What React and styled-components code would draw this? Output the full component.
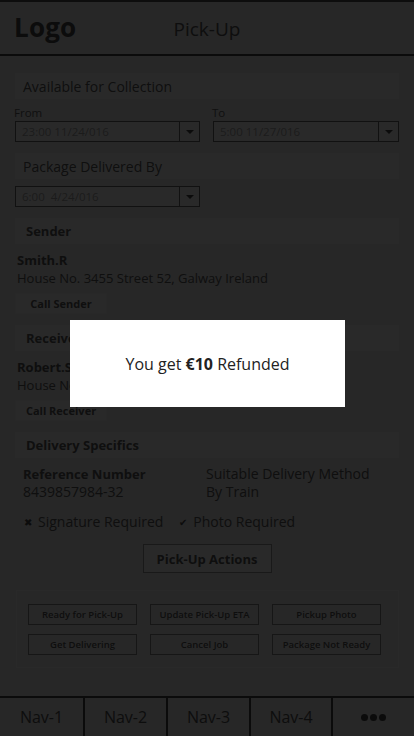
import React from 'react';
import styled, { createGlobalStyle } from 'styled-components';

const GlobalStyle = createGlobalStyle`
  html, body {
    margin: 0;
    padding: 0;
  }
  body {
    font-family: "Open Sans", "Liberation Sans", sans-serif;
    color: #666;
  }
  * {
    box-sizing: border-box;
  }
`;

const App = () => {
  const actions = [
    'Ready for Pick-Up',
    'Update Pick-Up ETA',
    'Pickup Photo',
    'Get Delivering',
    'Cancel Job',
    'Package Not Ready'
  ];

  return (
    <>
      <GlobalStyle />
      <Page>
        <Header>
          <Logo>Logo</Logo>
          <Title>Pick-Up</Title>
          <span />
        </Header>

        <Content>
          <SectionTitle>Available for Collection</SectionTitle>
          <FieldRow>
            <Field>
              <FieldLabel>From</FieldLabel>
              <Select>
                <SelectValue>23:00 11/24/016</SelectValue>
                <SelectArrow />
              </Select>
            </Field>
            <Field>
              <FieldLabel>To</FieldLabel>
              <Select>
                <SelectValue>5:00 11/27/016</SelectValue>
                <SelectArrow />
              </Select>
            </Field>
          </FieldRow>

          <SectionTitle>Package Delivered By</SectionTitle>
          <FieldRow>
            <Field>
              <Select>
                <SelectValue>6:00&nbsp; 4/24/016</SelectValue>
                <SelectArrow />
              </Select>
            </Field>
            <span />
          </FieldRow>

          <SectionTitle bold>Sender</SectionTitle>
          <Contact>
            <ContactName>Smith.R</ContactName>
            <ContactAddress>House No. 3455 Street 52, Galway Ireland</ContactAddress>
          </Contact>
          <SmallButton>Call Sender</SmallButton>

          <SectionTitle bold>Receiver</SectionTitle>
          <Contact>
            <ContactName>Robert.S</ContactName>
            <ContactAddress>House No. 7781 Street 14, Dublin Ireland</ContactAddress>
          </Contact>
          <SmallButton>Call Receiver</SmallButton>

          <SectionTitle bold>Delivery Specifics</SectionTitle>
          <Specs>
            <div>
              <SpecLabel bold>Reference Number</SpecLabel>
              <SpecValue>8439857984-32</SpecValue>
            </div>
            <div>
              <SpecLabel>Suitable Delivery Method</SpecLabel>
              <SpecValue>By Train</SpecValue>
            </div>
          </Specs>
          <Checks>
            <Check><CheckIcon>✖</CheckIcon>Signature Required</Check>
            <Check><CheckIcon>✔</CheckIcon>Photo Required</Check>
          </Checks>

          <ActionsToggle>Pick-Up Actions</ActionsToggle>

          <ActionsBox>
            {actions.map(action => (
              <ActionButton key={action}>{action}</ActionButton>
            ))}
          </ActionsBox>
        </Content>

        <BottomNav>
          <NavItem>Nav-1</NavItem>
          <NavItem>Nav-2</NavItem>
          <NavItem>Nav-3</NavItem>
          <NavItem>Nav-4</NavItem>
          <NavItem last>
            <Dot /><Dot /><Dot />
          </NavItem>
        </BottomNav>
      </Page>

      <Overlay>
        <Modal>
          <Message>You get <strong>€10</strong> Refunded</Message>
        </Modal>
      </Overlay>
    </>
  );
};

// Styled Components
const Page = styled.div`
  height: 100vh;
  display: flex;
  flex-direction: column;
  background-color: #eeeeee;
  overflow: hidden;
`;

const Header = styled.header`
  flex: none;
  height: 56px;
  border-top: 2px solid #555;
  border-bottom: 2px solid #444;
  display: grid;
  grid-template-columns: 1fr auto 1fr;
  align-items: center;
  padding: 0 14px;
`;

const Logo = styled.div`
  font-size: 26px;
  font-weight: 700;
  color: #4a4a4a;
  letter-spacing: 0.2px;
  line-height: 30px;
  margin-bottom: 2px;
`;

const Title = styled.div`
  font-size: 19px;
  color: #5a5a5a;
  line-height: 24px;
  padding-top: 2px;
`;

const Content = styled.main`
  flex: 1;
  min-height: 0;
  padding: 17px 15px 0 15px;
`;

const SectionTitle = styled.div`
  height: 26px;
  display: flex;
  align-items: center;
  padding-left: ${props => (props.bold ? '11px' : '8px')};
  background-color: #ffffff;
  font-size: ${props => (props.bold ? '13px' : '14px')};
  font-weight: ${props => (props.bold ? 700 : 400)};
  color: #5e5e5e;
  margin-bottom: 7px;
`;

const FieldRow = styled.div`
  display: grid;
  grid-template-columns: 185px 186px;
  gap: 13px;
  margin-bottom: 11px;
`;

const Field = styled.div`
  display: flex;
  flex-direction: column;
`;

const FieldLabel = styled.label`
  font-size: 11.5px;
  color: #666;
  margin-left: -1px;
  margin-bottom: 1px;
  line-height: 14px;
`;

const Select = styled.div`
  height: 21px;
  border: 1px solid #6a6a6a;
  display: flex;
  align-items: stretch;
  background-color: #fff;
`;

const SelectValue = styled.div`
  flex: 1;
  display: flex;
  align-items: center;
  padding-left: 6px;
  font-size: 11.5px;
  color: #aaa;
`;

const SelectArrow = styled.div`
  width: 20px;
  border-left: 1px solid #6a6a6a;
  position: relative;

  &::after {
    content: '';
    position: absolute;
    left: 6px;
    top: 8px;
    border-left: 4px solid transparent;
    border-right: 4px solid transparent;
    border-top: 4px solid #444;
  }
`;

const Contact = styled.div`
  padding: 0 2px;
`;

const ContactName = styled.div`
  font-size: 13px;
  font-weight: 700;
  color: #5a5a5a;
  line-height: 18px;
`;

const ContactAddress = styled.div`
  font-size: 13px;
  color: #5e5e5e;
  line-height: 18px;
`;

const SmallButton = styled.button`
  display: block;
  width: 92px;
  height: 21px;
  margin: 6px 0 11px 0;
  padding: 0;
  background-color: #fff;
  border: 1px solid #f4f4f4;
  font-family: inherit;
  font-size: 11px;
  font-weight: 700;
  color: #5e5e5e;
`;

const Specs = styled.div`
  display: grid;
  grid-template-columns: 183px 1fr;
  padding-left: 8px;
  margin-bottom: 12px;
`;

const SpecLabel = styled.div`
  font-size: ${props => (props.bold ? '13px' : '14px')};
  font-weight: ${props => (props.bold ? 700 : 400)};
  color: #5e5e5e;
  line-height: 18px;
`;

const SpecValue = styled.div`
  font-size: 14px;
  color: #5e5e5e;
  line-height: 18px;
`;

const Checks = styled.div`
  display: flex;
  gap: 16px;
  padding-left: 9px;
  margin-bottom: 13px;
  line-height: 18px;
`;

const Check = styled.div`
  font-size: 14px;
  color: #5e5e5e;
  display: flex;
  align-items: center;
  gap: 6px;
`;

const CheckIcon = styled.span`
  font-size: 10px;
  color: #4a4a4a;
`;

const ActionsToggle = styled.button`
  display: block;
  margin: 0 auto 17px auto;
  width: 129px;
  height: 29px;
  background-color: #fff;
  border: 1px solid #9a9a9a;
  font-family: inherit;
  font-size: 13px;
  font-weight: 700;
  color: #5a5a5a;
`;

const ActionsBox = styled.div`
  margin-left: 1px;
  border: 1px solid #fff;
  background-color: #f2f2f2;
  padding: 13px 16px 12px 11px;
  display: grid;
  grid-template-columns: repeat(3, 109px);
  column-gap: 13px;
  row-gap: 9px;
`;

const ActionButton = styled.button`
  height: 21px;
  padding: 0;
  background-color: #f2f2f2;
  border: 1px solid #888;
  font-family: inherit;
  font-size: 9.5px;
  font-weight: 600;
  color: #5a5a5a;
`;

const BottomNav = styled.nav`
  flex: none;
  height: 40px;
  border-top: 2px solid #444;
  display: grid;
  grid-template-columns: 85px 83px 83px 82px 1fr;
`;

const NavItem = styled.div`
  display: flex;
  align-items: center;
  justify-content: center;
  gap: 2px;
  border-right: ${props => (props.last ? 'none' : '2px solid #444')};
  font-size: 16px;
  color: #555;
`;

const Dot = styled.span`
  width: 7px;
  height: 7px;
  border-radius: 50%;
  background-color: #444;
`;

const Overlay = styled.div`
  position: fixed;
  inset: 0;
  background-color: rgba(0, 0, 0, 0.84);
  display: flex;
  align-items: center;
  justify-content: center;
`;

const Modal = styled.div`
  width: 275px;
  height: 87px;
  margin: 0 0 9px 1px;
  background-color: #fff;
  display: flex;
  align-items: center;
  justify-content: center;
`;

const Message = styled.p`
  margin: 0;
  font-size: 16px;
  color: #222;

  strong {
    font-weight: 700;
  }
`;

export default App;
